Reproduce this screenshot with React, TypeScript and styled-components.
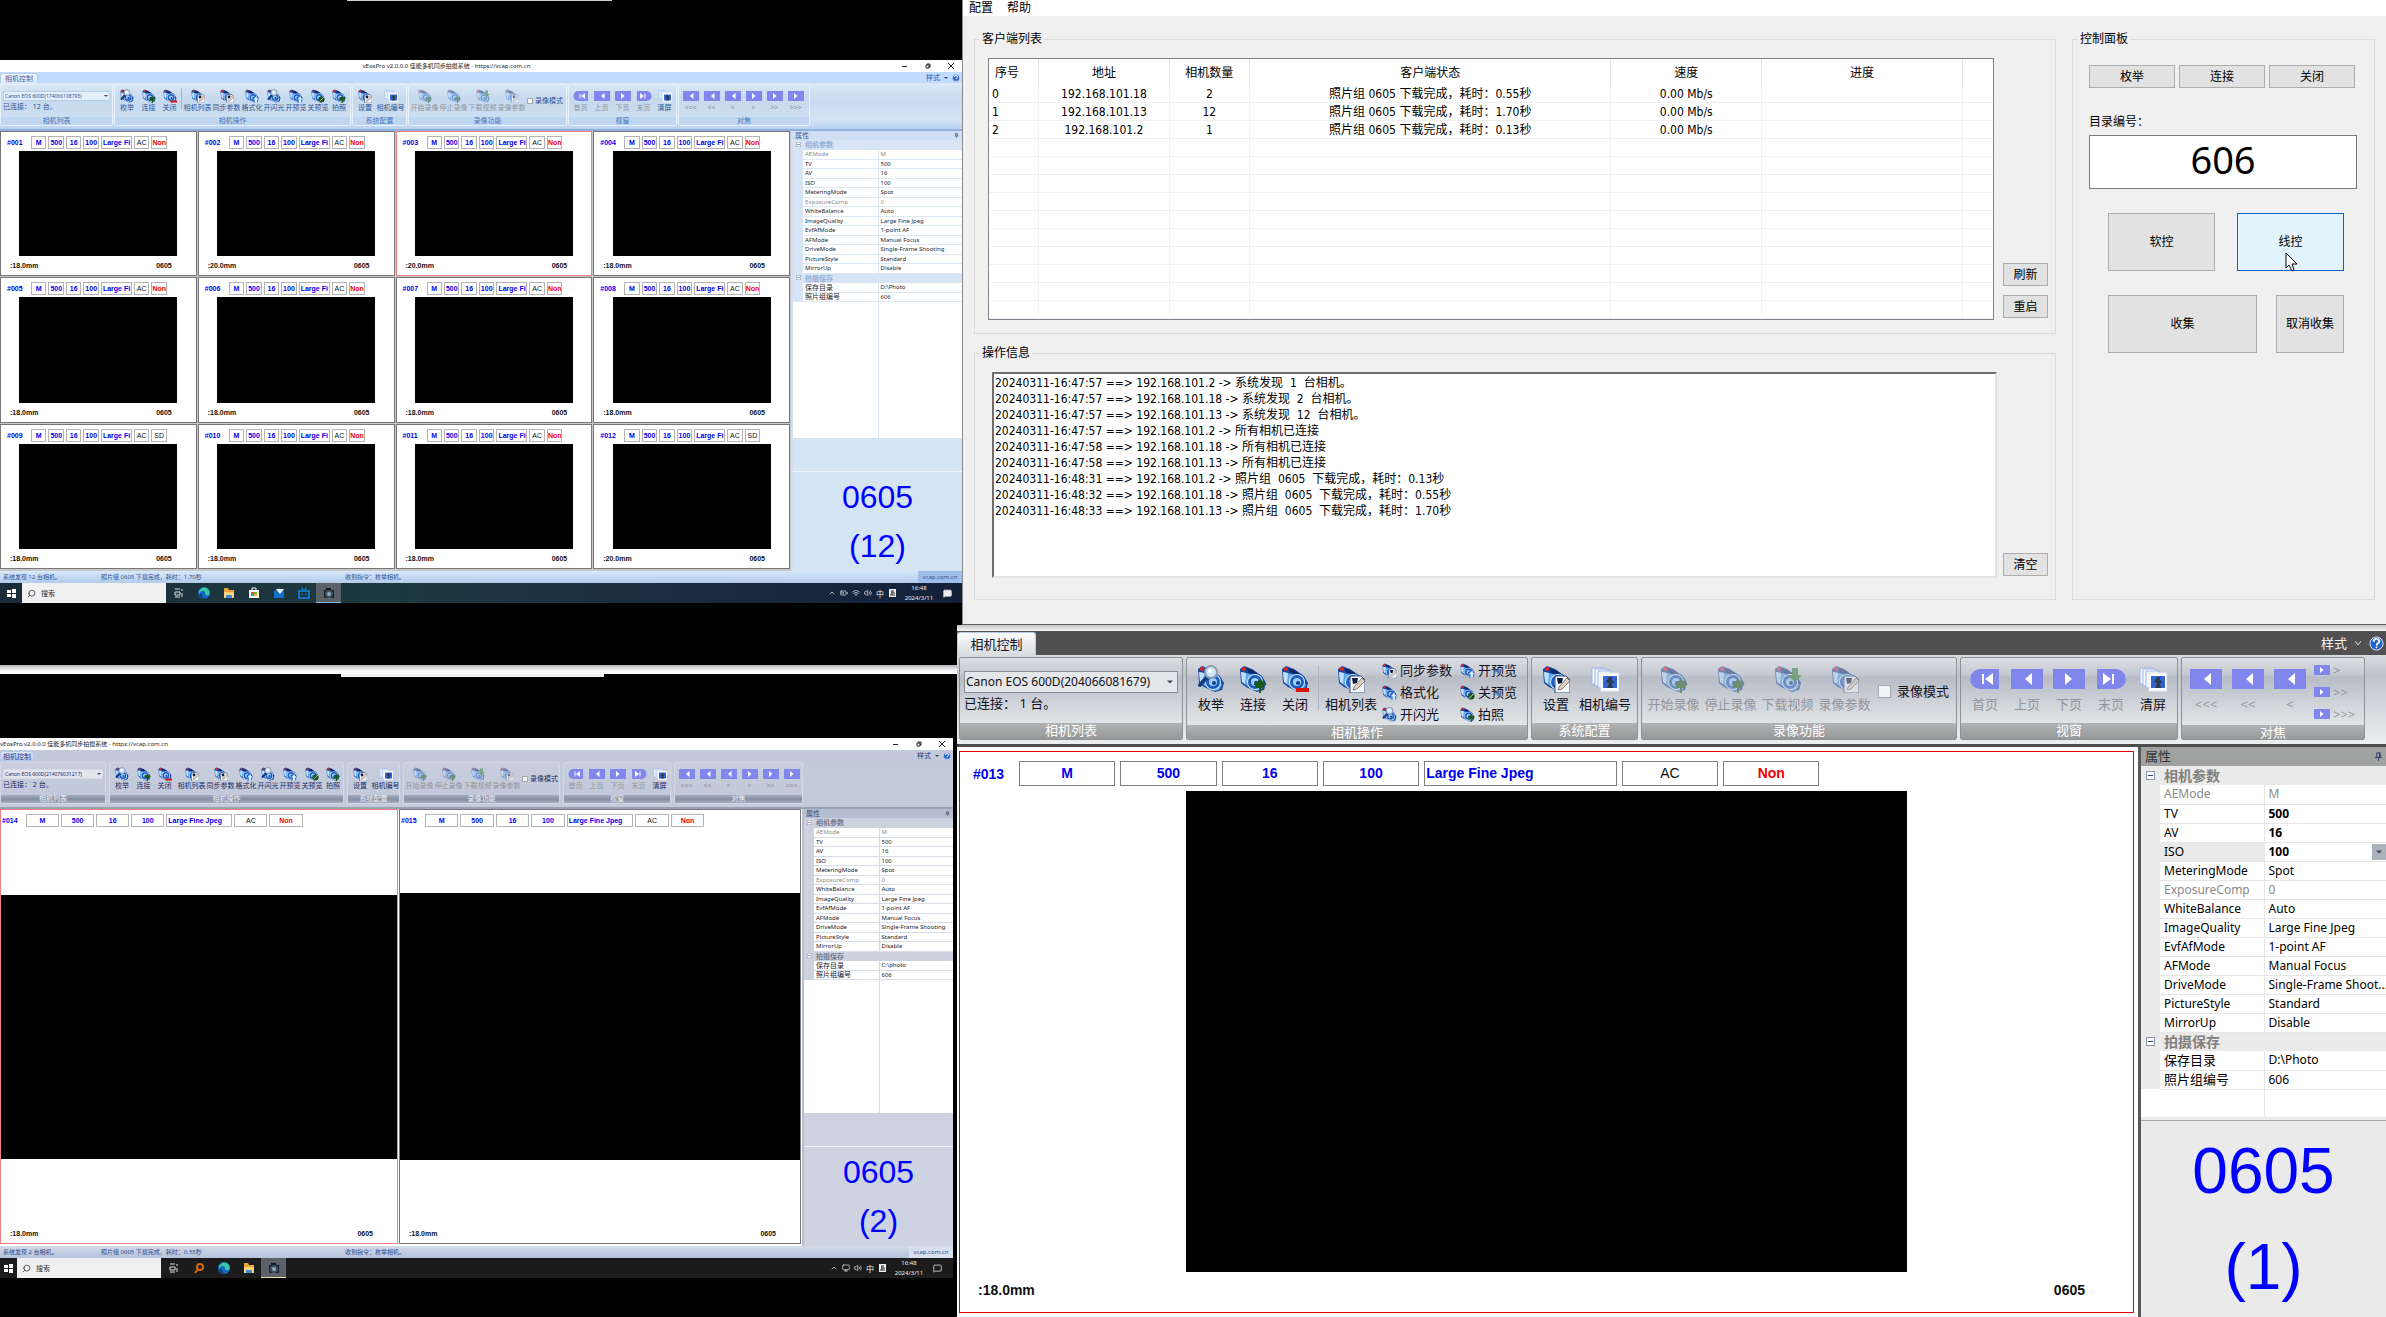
import React from 'react';
import styled, { createGlobalStyle, css, ThemeProvider } from 'styled-components';
import { ChevronUp, Search, Volume2, Wifi, MessageSquare, BatteryMedium, Monitor } from 'lucide-react';

const uiFont = `"Noto Sans", "Noto Sans CJK SC", sans-serif`;
const tahoma = `"DejaVu Sans Condensed", "DejaVu Sans", "Noto Sans CJK SC", sans-serif`;
const arial = `"Liberation Sans", "Noto Sans CJK SC", sans-serif`;

const Global = createGlobalStyle`
  * { box-sizing: border-box; }
  body { margin: 0; background: #000; font-family: ${uiFont}; }
  button, input, select, textarea { font: inherit; color: inherit; margin: 0; }
  button { cursor: pointer; }
`;

/* ---------- themes ---------- */

const small = {
  large: false,
  text: 6, cjk: 7, combo: 5, category: 7, chip: 7, counter: 32, counterLine: 49,
  tabBar: 11, tabWidth: 38, ribbon: 48, ribbonPad: '1px 0 3px', groupGap: 1,
  icon: 14, buttonPad: 4, label: 8, captionHeight: 8,
  comboHeight: 10, comboPad: '6px 2px 0', comboGap: 1,
  chipHeight: 13, chipGap: 2, chipLine: 11,
  cellPadTop: 4, footer: 19, stagePad: '2px 0 0',
  panelHead: 9, gutter: 10, cellPad: 2,
};

const blueTheme = {
  ...small,
  tabBg: '#c0dbff', tabFace: 'linear-gradient(#f3f8ff, #dbe8f8)', tabText: '#3d5f9c', toolText: '#35589b',
  ribbonBg: 'linear-gradient(#dce9f7 0%, #c8daf0 40%, #d2e4f5 80%, #b9d2f0 100%)',
  ribbonEdge: '#8fb0dd', groupBg: 'linear-gradient(#d9e6f4, #c6d9ee 35%, #cfe0f2)', groupEdge: '#e6f0fa',
  captionBg: '#bfd7f0', captionText: '#4c76b8', labelText: '#2f5493', fieldBg: '#e3effc', fieldEdge: '#b4cdea',
  headBg: '#cfe0f4', headText: '#3a5f9e', catBg: '#d6e4f3', catText: '#93aedb', grid: '#dce8f4', propText: '#222834',
  counterBg: '#d5e4f3', statusBg: 'linear-gradient(#d7e8fb, #b2cbea)', statusText: '#33568f', statusEnd: '#9dbee8',
  split: 'repeat(4, minmax(0, 1fr))', sideWidth: '169px', nameWidth: '75px', labelLeft: 6, labelWidth: 24, chips: 72,
  cellEdge: '#777', activeEdge: '#f28080', frame: '#c8c8c8',
};

const slateTheme = {
  ...small,
  tabWidth: 34, groupGap: 3,
  tabBg: '#c3c9da', tabFace: 'linear-gradient(#dfe8f8, #b6c7ea)', tabText: '#27408b', toolText: '#27376e',
  ribbonBg: '#c3cada',
  ribbonEdge: '#9aa1b3', groupBg: 'linear-gradient(#c8cede, #c0c7d8)', groupEdge: '#d3d8e4',
  captionBg: 'linear-gradient(#a7afc2, #858da2 50%, #a3abbe)', captionText: '#eef0f6', labelText: '#1d2d66', fieldBg: '#e2e5ee', fieldEdge: '#d6dae5',
  headBg: '#b6bfd2', headText: '#3b4c7a', catBg: '#cdd2df', catText: '#747c90', grid: '#d9dde8', propText: '#1e2028',
  counterBg: '#cdd3e0', statusBg: 'linear-gradient(#d3dbe9, #b5c2da)', statusText: '#2f4a8c', statusEnd: '#d7dfec',
  split: '398px minmax(0, 1fr)', sideWidth: '149px', nameWidth: '65px', labelLeft: 1, labelWidth: 24, chips: 70,
  cellEdge: '#777', activeEdge: '#ef8080', frame: '#fff',
};

const silverTheme = {
  large: true,
  text: 12, cjk: 13, combo: 12, category: 14, chip: 14, counter: 64, counterLine: 96,
  tabBar: 24, tabWidth: 79, ribbon: 92, ribbonPad: '2px 0 4px 2px', groupGap: 3,
  icon: 28, buttonPad: 7, label: 20, captionHeight: 16,
  comboHeight: 22, comboPad: '13px 4px 0', comboGap: 0,
  chipHeight: 25, chipGap: 5, chipLine: 23,
  cellPadTop: 9, footer: 40, stagePad: '5px 0 0',
  panelHead: 19, gutter: 19, cellPad: 4,
  tabBg: '#515050', tabFace: 'linear-gradient(#fbfbfc, #d9dce1)', tabText: '#14142a', toolText: '#f2f2f2',
  ribbonBg: 'linear-gradient(#d9dbde 0%, #bfc3cb 22%, #cdd0d6 45%, #e4e7e9 85%, #eceef0 100%)',
  ribbonEdge: '#4c4c4c', groupBg: 'linear-gradient(#dcdee2 0%, #c6c9d1 20%, #b8bcc6 24%, #d3d6da 60%, #e6e9ea 90%)', groupEdge: '#8f9194',
  captionBg: 'linear-gradient(#b0b2b4, #979898)', captionText: '#ffffff', labelText: '#10101c', fieldBg: '#e3e7e9', fieldEdge: '#8a8d92',
  headBg: '#9fa2a1', headText: '#33363a', catBg: '#eaeaea', catText: '#808080', grid: '#e6e6e6', propText: '#000',
  counterBg: '#eaeaea', statusBg: '#eaeaea', statusText: '#000', statusEnd: '#eaeaea',
  split: 'minmax(0, 1fr)', sideWidth: '245px', nameWidth: '104px', labelLeft: 13, labelWidth: 46, chips: 69,
  cellEdge: '#777', activeEdge: '#e60000', frame: '#fff',
};

/* ---------- drawings ---------- */

type Badge = 'search' | 'plus' | 'minus' | 'edit' | 'reload' | 'slash' | 'down';

const CameraIcon = ({ badge, size, faded }: { badge: Badge; size: number; faded?: boolean }) => (
  <svg width={size} height={size} viewBox="0 0 28 28" opacity={faded ? 0.5 : 1} aria-hidden="true">
    <path d="M1 4 L5 1 L13 4 L23 11 L27 18 L25 25 L18 27 L7 22 L2 18Z" fill="#17459c" />
    <path d="M2 7 L11 9 L22 14 L25 20 L22 25 L17 26 L8 21 L3 17Z" fill="#5fa8ee" />
    <path d="M2 7 L7 8 L6 19 L3 17Z" fill="#bfe0ff" />
    <path d="M7 3 L13 5 L19 9 L10 8Z" fill="#0d2766" />
    <circle cx="5" cy="4" r="2" fill="#e2231f" />
    <circle cx="16" cy="17" r="8" fill="#d4eaff" />
    <circle cx="16" cy="17" r="7" fill="#1e5cc0" />
    <circle cx="16" cy="17" r="4" fill="#9fd0ff" />
    <circle cx="17" cy="18" r="2" fill="#11398c" />
    {badge === 'search' && (
      <g>
        <path d="M11 11 L3 20" stroke="#163a80" strokeWidth="4" strokeLinecap="round" />
        <circle cx="14" cy="7" r="6" fill="#cfe4f4" stroke="#8d9eb2" strokeWidth="2" />
        <circle cx="13" cy="6" r="2" fill="#fff" />
      </g>
    )}
    {badge === 'plus' && <path d="M21 14 L28 20 L25 20 L25 23 L22 23 L22 28 L20 28 L20 23 L16 23 L16 20 L14 20Z" fill="#1c5a1c" />}
    {badge === 'minus' && <path d="M15 23 H28 V27 H15Z" fill="#d8140f" />}
    {badge === 'edit' && (
      <g>
        <path d="M13 11 H24 L28 15 V28 H13Z" fill="#f7fbff" stroke="#24487f" />
        <path d="M15 13 L21 13 L20 18 L16 19Z" fill="#0b1c3f" />
        <path d="M17 22 L25 13 L28 16 L20 24 L16 25Z" fill="#e3cfc0" stroke="#6d6258" strokeWidth="0.8" />
      </g>
    )}
    {badge === 'reload' && (
      <g>
        <path d="M17 13 L27 19 L26 27 L17 25Z" fill="#2f7fe0" />
        <path d="M22 15 L27 21 L24 21 L24 27 L20 27 L20 21 L17 21Z" fill="#dff0ff" />
      </g>
    )}
    {badge === 'slash' && (
      <g>
        <circle cx="21" cy="21" r="6" fill="#1c4d1e" />
        <path d="M17 25 L26 16" stroke="#8fc48a" strokeWidth="2" />
      </g>
    )}
    {badge === 'down' && <path d="M18 3 H24 V10 H28 L21 17 L14 10 H18Z" fill="#2f7d33" />}
  </svg>
);

const GalleryIcon = ({ size }: { size: number }) => (
  <svg width={size} height={size} viewBox="0 0 28 28" aria-hidden="true">
    <path d="M1 3 H14 V19 H1Z" fill="#f8fbff" stroke="#9bb2e6" />
    <path d="M4 4 H17 V21 H4Z" fill="#f8fbff" stroke="#9bb2e6" />
    <path d="M7 6 H20 V23 H7Z" fill="#f8fbff" stroke="#9bb2e6" />
    <path d="M10 8 H28 V26 H10Z" fill="#fff" stroke="#dfe6f6" />
    <path d="M12 11 H26 V23 H12Z" fill="#3563d2" />
    <path d="M18 12 L21 12 L21 15 L24 18 L21 18 L22 23 L16 23 L18 18 L15 17Z" fill="#2c3b4f" />
  </svg>
);

const NavIcon = ({ kind, size }: { kind: 'first' | 'prev' | 'next' | 'last'; size: number }) => (
  <svg width={(size * 8) / 7} height={size} viewBox="0 0 32 28" aria-hidden="true">
    {kind === 'first' && <path d="M11 4 H30 V24 H11 A10 10 0 0 1 11 4Z" fill="#8086ec" />}
    {kind === 'last' && <path d="M2 4 H21 A10 10 0 0 1 21 24 H2Z" fill="#8086ec" />}
    {(kind === 'prev' || kind === 'next') && <path d="M0 4 H32 V24 H0Z" fill="#8086ec" />}
    {kind === 'first' && <path d="M13 9 H15 V19 H13Z M24 8 V20 L16 14Z" fill="#fff" />}
    {kind === 'last' && <path d="M17 9 H19 V19 H17Z M8 8 V20 L16 14Z" fill="#fff" />}
    {kind === 'prev' && <path d="M21 8 V20 L14 14Z" fill="#fff" />}
    {kind === 'next' && <path d="M12 8 V20 L19 14Z" fill="#fff" />}
  </svg>
);

const Arrow = ({ size, color = '#445' }: { size: number; color?: string }) => (
  <svg width={size} height={size} viewBox="0 0 8 8" aria-hidden="true"><path d="M0 2 H8 L4 6Z" fill={color} /></svg>
);

const Caret = () => (
  <svg width="6" height="6" viewBox="0 0 6 6" aria-hidden="true"><path d="M0 1 L3 5 L6 1" fill="none" stroke="#ddd" /></svg>
);

const HelpIcon = ({ size }: { size: number }) => (
  <svg width={size} height={size} viewBox="0 0 16 16" aria-hidden="true">
    <circle cx="8" cy="8" r="7" fill="#2463c8" stroke="#e6efff" />
    <path d="M5 6 Q5 3 8 3 Q11 3 11 6 Q11 7 9 8 L8 10" fill="none" stroke="#fff" strokeWidth="2" />
    <circle cx="8" cy="12" r="1" fill="#fff" />
  </svg>
);

const PinIcon = ({ size }: { size: number }) => (
  <svg width={size} height={size} viewBox="0 0 10 10" aria-hidden="true">
    <path d="M3 1 H7 V6 M3 1 V6 M6 1 V6 M1 6 H9 M5 6 V10" fill="none" stroke="#2c3a5c" strokeWidth="1" />
  </svg>
);

/* ---------- desktop ---------- */

const Desktop = styled.main`
  display: grid;
  grid-template-columns: minmax(0, 957fr) minmax(0, 1429fr);
  height: 100vh;
  background: #000;
  overflow: hidden;
`;

const LeftScreens = styled.div`
  display: grid;
  grid-template-rows: 60fr minmax(0, 543fr) 62fr 12fr 61fr minmax(0, 540fr) 39fr;
  min-width: 0;
`;

const RightScreens = styled.div`
  display: grid;
  grid-template-rows: auto 6px minmax(0, 1fr);
  min-width: 0;
`;

const Void = styled.div`
  background: #000;
`;

const Sliver = styled.div`
  width: 265px;
  height: 1px;
  margin-left: 347px;
  background: #cfcfcf;
`;

const Seam = styled.div`
  display: flex;
  flex-direction: column;
`;

const SeamBand = styled.div`
  flex: 3;
  background: linear-gradient(#b9b3b9, #f4f4f4 60%, #fff);
`;

const SeamTail = styled.div`
  flex: 1;
  width: 263px;
  margin-left: 341px;
  background: #f0f0f0;
`;

const Shade = styled.div`
  background: linear-gradient(#c4c4c4, #f4f4f4);
`;

const Screen = styled.section<{ $bleed?: number; $cut?: number }>`
  display: flex;
  flex-direction: column;
  min-width: 0;
  min-height: 0;
  margin-right: ${(p) => (p.$cut ?? 0) - (p.$bleed ?? 0)}px;
`;

/* ---------- camera application ---------- */

const AppWindow = styled.div`
  display: flex;
  flex-direction: column;
  flex: 1;
  min-height: 0;
  min-width: 0;
  font-size: ${(p) => p.theme.text}px;
`;

const TitleBar = styled.header<{ $left?: boolean }>`
  display: flex;
  align-items: center;
  height: 12px;
  background: #fff;
  color: #222;
  line-height: 12px;
  span { flex: 1; text-align: ${(p) => (p.$left ? 'left' : 'center')}; white-space: nowrap; }
`;

const WindowButton = styled.button`
  display: grid;
  place-items: center;
  width: 23px;
  height: 12px;
  padding: 0;
  border: 0;
  background: none;
`;

const TabBar = styled.div`
  display: flex;
  align-items: flex-end;
  justify-content: space-between;
  height: ${(p) => p.theme.tabBar}px;
  background: ${(p) => p.theme.tabBg};
`;

const Tab = styled.button`
  align-self: stretch;
  width: ${(p) => p.theme.tabWidth}px;
  margin-top: 1px;
  padding: 0;
  border: 1px solid #b7cbe8;
  border-bottom: 0;
  border-radius: 3px 3px 0 0;
  background: ${(p) => p.theme.tabFace};
  color: ${(p) => p.theme.tabText};
  font-size: ${(p) => p.theme.cjk}px;
  line-height: 1;
`;

const StyleMenu = styled.div`
  display: flex;
  align-items: center;
  align-self: stretch;
  gap: ${(p) => (p.theme.large ? 8 : 4)}px;
  padding-right: 2px;
  color: ${(p) => p.theme.toolText};
  font-size: ${(p) => p.theme.cjk}px;
`;

const PlainButton = styled.button`
  display: flex;
  align-items: center;
  gap: ${(p) => (p.theme.large ? 8 : 4)}px;
  padding: 0;
  border: 0;
  background: none;
  line-height: 1;
`;

const Ribbon = styled.nav`
  display: flex;
  gap: ${(p) => p.theme.groupGap}px;
  height: ${(p) => p.theme.ribbon}px;
  padding: ${(p) => p.theme.ribbonPad};
  background: ${(p) => p.theme.ribbonBg};
  border-bottom: ${(p) => (p.theme.large ? 3 : 2)}px solid ${(p) => p.theme.ribbonEdge};
`;

const Group = styled.section<{ $w: number }>`
  display: flex;
  flex-direction: column;
  flex: 0 0 ${(p) => p.$w}px;
  border: 1px solid ${(p) => p.theme.groupEdge};
  border-radius: 2px;
  background: ${(p) => p.theme.groupBg};
  color: ${(p) => p.theme.labelText};
  font-size: ${(p) => p.theme.cjk}px;
  white-space: nowrap;
  overflow: hidden;
`;

const GroupBody = styled.div`
  display: flex;
  flex: 1;
  align-items: flex-start;
  padding-left: ${(p) => (p.theme.large ? 3 : 1)}px;
`;

const Caption = styled.h2`
  margin: 0;
  height: ${(p) => p.theme.captionHeight}px;
  line-height: ${(p) => p.theme.captionHeight - 1}px;
  background: ${(p) => p.theme.captionBg};
  color: ${(p) => p.theme.captionText};
  font-size: inherit;
  font-weight: 400;
  text-align: center;
`;

const Tool = styled.button<{ $w: number }>`
  display: flex;
  flex-direction: column;
  align-items: center;
  flex: 0 0 ${(p) => p.$w}px;
  padding: ${(p) => p.theme.buttonPad}px 0 0;
  border: 0;
  background: none;
  line-height: ${(p) => p.theme.label}px;
  white-space: nowrap;
  svg { display: block; margin-bottom: 1px; }
  &:disabled { color: #92959c; }
`;

const Divider = styled.span`
  width: 1px;
  height: 66%;
  margin: ${(p) => (p.theme.large ? '8px 4px 0 2px' : '3px 1px 0')};
  background: #a9b3c4;
`;

const MiniTools = styled.div<{ $cols: string }>`
  display: grid;
  grid-template-columns: ${(p) => p.$cols};
  grid-auto-flow: column;
  grid-template-rows: repeat(3, 22px);
  padding: 1px 0 0 3px;
`;

const MiniTool = styled.button`
  display: flex;
  align-items: center;
  gap: 3px;
  padding: 0;
  border: 0;
  background: none;
  line-height: 20px;
  white-space: nowrap;
  &:disabled { color: #92959c; }
`;

const CheckLabel = styled.label`
  display: flex;
  align-items: center;
  gap: ${(p) => (p.theme.large ? 6 : 2)}px;
  margin: ${(p) => (p.theme.large ? '23px 0 0 5px' : '12px 0 0 1px')};
  line-height: ${(p) => p.theme.label}px;
  input {
    appearance: none;
    width: ${(p) => (p.theme.large ? 13 : 6)}px;
    height: ${(p) => (p.theme.large ? 13 : 6)}px;
    border: 1px solid #a4a8b0;
    background: #f2f4f6;
  }
`;

const ComboBody = styled.div`
  flex: 1;
  display: flex;
  flex-direction: column;
  gap: ${(p) => p.theme.comboGap}px;
  padding: ${(p) => p.theme.comboPad};
  line-height: ${(p) => (p.theme.large ? 20 : 10)}px;
`;

const Combo = styled.div`
  display: flex;
  align-items: center;
  height: ${(p) => p.theme.comboHeight}px;
  padding: 0 ${(p) => (p.theme.large ? 4 : 1)}px 0 1px;
  border: 1px solid ${(p) => p.theme.fieldEdge};
  background: ${(p) => p.theme.fieldBg};
  font-size: ${(p) => p.theme.combo}px;
  select { appearance: none; flex: 1; min-width: 0; padding: 0; border: 0; background: none; line-height: 1; }
`;

const Work = styled.div`
  display: flex;
  flex: 1;
  min-height: 0;
  background: ${(p) => (p.theme.large ? '#5a5959' : p.theme.headBg)};
`;

const Wall = styled.div<{ $rows: number }>`
  display: grid;
  flex: 1;
  grid-template-columns: ${(p) => p.theme.split};
  grid-template-rows: repeat(${(p) => p.$rows}, minmax(0, 1fr));
  gap: 1px;
  min-width: 0;
  margin-right: ${(p) => (p.theme.large ? 3 : 2)}px;
  padding: ${(p) => (p.theme.large ? '4px 4px 4px 2px' : '0 1px 2px 0')};
  background: ${(p) => p.theme.frame};
`;

const Cell = styled.article<{ $active?: boolean }>`
  display: flex;
  flex-direction: column;
  min-width: 0;
  min-height: 0;
  padding-top: ${(p) => p.theme.cellPadTop}px;
  border: 1px solid ${(p) => (p.$active ? p.theme.activeEdge : p.theme.cellEdge)};
  background: #fff;
  font: bold ${(p) => p.theme.chip}px ${arial};
`;

const CellHead = styled.header`
  display: flex;
  align-items: center;
  padding-left: ${(p) => p.theme.labelLeft}px;
  color: #0000f0;
  strong { flex: 0 0 ${(p) => p.theme.labelWidth}px; }
`;

const Chips = styled.div`
  display: grid;
  grid-template-columns: repeat(4, minmax(0, 1fr)) minmax(0, 2fr) repeat(2, minmax(0, 1fr));
  gap: ${(p) => p.theme.chipGap}px;
  flex: 0 0 ${(p) => p.theme.chips}%;
`;

const Chip = styled.span<{ $tone?: 'red' | 'black'; $left?: boolean }>`
  height: ${(p) => p.theme.chipHeight}px;
  padding-left: ${(p) => (p.$left ? 1 : 0)}px;
  border: 1px solid ${(p) => (p.theme.large ? '#808080' : '#b4b4b4')};
  background: #fff;
  color: ${(p) => (p.$tone === 'red' ? '#f00000' : p.$tone === 'black' ? '#111' : 'inherit')};
  font-weight: ${(p) => (p.$tone === 'black' ? 400 : 700)};
  line-height: ${(p) => p.theme.chipLine}px;
  text-align: ${(p) => (p.$left ? 'left' : 'center')};
  white-space: nowrap;
  overflow: hidden;
`;

const Stage = styled.div`
  display: flex;
  flex: 1;
  align-items: center;
  justify-content: center;
  min-height: 0;
  padding: ${(p) => p.theme.stagePad};
`;

const Preview = styled.div<{ $fill?: boolean }>`
  aspect-ratio: 3 / 2;
  background: #000;
  ${(p) => (p.$fill ? css`width: 100%;` : css`height: 100%;`)}
`;

const CellFoot = styled.footer`
  display: flex;
  align-items: center;
  justify-content: space-between;
  height: ${(p) => p.theme.footer}px;
  padding: ${(p) => (p.theme.large ? '0 48px 4px 18px' : '0 24px 0 9px')};
  color: #111;
`;

const Side = styled.aside`
  display: flex;
  flex-direction: column;
  flex: 0 0 ${(p) => p.theme.sideWidth};
  min-width: 0;
  background: #fff;
  color: ${(p) => p.theme.propText};
`;

const SideHead = styled.div`
  display: flex;
  align-items: center;
  justify-content: space-between;
  height: ${(p) => p.theme.panelHead}px;
  padding: 0 3px 0 ${(p) => p.theme.cellPad}px;
  background: ${(p) => p.theme.headBg};
  color: ${(p) => p.theme.headText};
  font-size: ${(p) => p.theme.cjk}px;
  line-height: 1;
`;

const Props = styled.table`
  width: 100%;
  height: ${(p) => (p.theme.large ? 323 : 162)}px;
  border-collapse: collapse;
  table-layout: fixed;
  th, td {
    padding: 0 0 0 ${(p) => p.theme.cellPad}px;
    border: 0 solid ${(p) => p.theme.grid};
    font-weight: 400;
    line-height: 1;
    text-align: left;
    white-space: nowrap;
    overflow: hidden;
  }
  tr { height: ${(p) => (p.theme.large ? 19 : 9)}px; }
`;

const Gutter = styled.col`width: ${(p) => p.theme.gutter}px;`;
const NameCol = styled.col`width: ${(p) => p.theme.nameWidth};`;

const Toggle = styled.td`
  && { padding: 0; background: ${(p) => p.theme.catBg}; text-align: center; }
  svg { display: block; margin: auto; }
`;

const CategoryName = styled.th`
  && {
    background: ${(p) => p.theme.catBg};
    color: ${(p) => p.theme.catText};
    font-size: ${(p) => p.theme.category}px;
    font-weight: 700;
  }
`;

const NameCell = styled.th<{ $dim?: boolean; $on?: boolean; $cjk?: boolean }>`
  && {
    border-bottom-width: 1px;
    background: ${(p) => (p.$on ? '#eaeaea' : '#fff')};
    color: ${(p) => (p.$dim ? '#8a8a8a' : 'inherit')};
    font-size: ${(p) => (p.$cjk ? p.theme.cjk : p.theme.text)}px;
  }
`;

const ValueCell = styled.td<{ $dim?: boolean; $bold?: boolean }>`
  && {
    border-bottom-width: 1px;
    border-left-width: 1px;
    color: ${(p) => (p.$dim ? '#8a8a8a' : 'inherit')};
    font-weight: ${(p) => (p.$bold ? 700 : 400)};
  }
`;

const ValuePick = styled.label`
  display: flex;
  align-items: center;
  height: 16px;
  select { appearance: none; flex: 1; min-width: 0; height: 16px; padding: 0; border: 0; background: none; line-height: 1; }
  span { display: grid; place-items: center; width: 14px; height: 16px; background: #aab2bc; }
`;

const Blank = styled.div`
  flex: 1;
  margin-left: ${(p) => Number(p.theme.gutter) + parseInt(p.theme.nameWidth, 10)}px;
  border-left: 1px solid ${(p) => p.theme.grid};
`;

const Fill = styled.div`
  height: ${(p) => (p.theme.large ? 3 : 33)}px;
  background: ${(p) => p.theme.counterBg};
`;

const Counter = styled.output`
  display: flex;
  flex-direction: column;
  justify-content: center;
  align-items: center;
  height: ${(p) => (p.theme.large ? 197 : 100)}px;
  border-top: 1px solid ${(p) => (p.theme.large ? '#a8a8a8' : '#f0f5fb')};
  background: ${(p) => p.theme.counterBg};
  color: #0000ff;
  font: ${(p) => p.theme.counter}px / ${(p) => p.theme.counterLine}px ${arial};
`;

const StatusBar = styled.footer`
  display: grid;
  grid-template-columns: 98px 244px 1fr 44px;
  height: 12px;
  background: ${(p) => p.theme.statusBg};
  color: ${(p) => p.theme.statusText};
  line-height: 12px;
  white-space: nowrap;
  span { padding-left: 3px; }
  span:last-child { background: ${(p) => p.theme.statusEnd}; text-align: center; padding: 0; }
`;

/* ---------- task bar ---------- */

const TaskBar = styled.footer<{ $bg: string }>`
  display: flex;
  align-items: center;
  height: 20px;
  background: ${(p) => p.$bg};
  color: #eee;
  font-size: 6px;
`;

const StartButton = styled.button<{ $w: number }>`
  display: grid;
  place-items: center;
  width: ${(p) => p.$w}px;
  height: 20px;
  padding: 0;
  border: 0;
  background: none;
`;

const SearchBox = styled.label`
  display: flex;
  align-items: center;
  gap: 5px;
  width: 144px;
  height: 20px;
  padding-left: 5px;
  background: #f0f0f0;
  color: #333;
  svg { transform: scaleX(-1); }
  input { flex: 1; min-width: 0; padding: 0; border: 0; background: none; font-size: 7px; line-height: 1; }
  input::placeholder { color: #333; }
`;

const TaskButton = styled.button<{ $on?: string }>`
  display: grid;
  place-items: center;
  width: 25px;
  height: 20px;
  padding: 0;
  border: 0;
  border-bottom: 1px solid ${(p) => p.$on ?? 'transparent'};
  background: ${(p) => (p.$on ? '#5a6168' : 'none')};
`;

const Tray = styled.div<{ $right: number }>`
  display: flex;
  align-items: center;
  margin-left: auto;
  padding-right: ${(p) => p.$right}px;
  span { display: grid; place-items: center; width: 12px; font-size: 8px; }
  time { width: 34px; margin-left: 4px; line-height: 10px; text-align: center; }
`;

const Notice = styled.span`
  && { width: 22px; }
`;

const TaskGlyph = ({ kind }: { kind: string }) => (
  <svg width="12" height="12" viewBox="0 0 12 12" aria-hidden="true">
    {kind === 'view' && <path d="M2 2 H7 M2 5 H7 V8 H2Z M2 10 H7 M9 2 V4 M9 6 V10" stroke="#ddd" fill="none" />}
    {kind === 'find' && <g fill="none" stroke="#d3690f" strokeWidth="2"><circle cx="7" cy="5" r="3" /><path d="M5 7 L2 11" /></g>}
    {kind === 'edge' && (
      <g>
        <circle cx="6" cy="6" r="6" fill="#1668c4" />
        <path d="M1 4 Q4 -1 9 1 Q13 4 11 8 Q8 9 7 7 Q8 4 5 4 Q2 4 1 7Z" fill="#3cc6a8" />
        <path d="M4 6 Q3 10 7 11 Q3 12 1 8Z" fill="#0d3f8a" />
      </g>
    )}
    {kind === 'folder' && <g><path d="M1 1 H5 L6 3 H11 V11 H1Z" fill="#e9a33b" /><path d="M1 5 H11 V11 H1Z" fill="#fcd27a" /><path d="M3 8 H9 V11 H3Z" fill="#3c8ed8" /></g>}
    {kind === 'store' && (
      <g>
        <path d="M1 3 H11 V11 H1Z" fill="#f4f4f4" /><path d="M4 3 V1 H8 V3" fill="none" stroke="#f4f4f4" />
        <path d="M3 5 H6 V7 H3Z" fill="#e5502b" /><path d="M6 5 H9 V7 H6Z" fill="#72b62b" />
        <path d="M3 7 H6 V9 H3Z" fill="#2b90e0" /><path d="M6 7 H9 V9 H6Z" fill="#f2b525" />
      </g>
    )}
    {kind === 'mail' && <g><path d="M1 4 L6 1 L11 4 V11 H1Z" fill="#1470c9" /><path d="M3 2 H11 L7 7Z" fill="#f2f7fc" /></g>}
    {kind === 'tv' && <g fill="none" stroke="#1184e8" strokeWidth="1.5"><path d="M1 4 H11 V11 H1Z M4 1 L5 3 M8 1 L7 3" /><path d="M4 7 V8 M8 7 V8" /></g>}
    {kind === 'cam' && <g><path d="M1 3 H11 V11 H1Z" fill="#1b2026" /><circle cx="6" cy="7" r="4" fill="#3d5063" /><circle cx="6" cy="7" r="2" fill="#93a9bd" /><path d="M3 1 H8 V3 H3Z" fill="#11161b" /></g>}
  </svg>
);

const WindowsTaskBar = ({ bg, accent, start, icons, second, right }: {
  bg: string; accent: string; start: number; icons: string[]; second?: boolean; right: number;
}) => (
  <TaskBar $bg={bg}>
    <StartButton $w={start} aria-label="开始">
      <svg width="9" height="9" viewBox="0 0 9 9" aria-hidden="true"><path d="M0 1 H4 V4 H0Z M5 0 H9 V4 H5Z M0 5 H4 V8 H0Z M5 5 H9 V9 H5Z" fill="#fff" /></svg>
    </StartButton>
    <SearchBox>
      <Search size={9} strokeWidth={2} />
      <input placeholder="搜索" aria-label="搜索" />
    </SearchBox>
    {icons.map((k, i) => (
      <TaskButton key={k} aria-label={k} $on={i === icons.length - 1 ? accent : undefined}><TaskGlyph kind={k} /></TaskButton>
    ))}
    <Tray $right={right}>
      <span><ChevronUp size={8} /></span>
      {second ? <span><Monitor size={8} /></span> : <><span><BatteryMedium size={8} /></span><span><Wifi size={8} /></span></>}
      <span><Volume2 size={8} /></span>
      <span>中</span>
      <span>
        <svg width="7" height="8" viewBox="0 0 7 8" aria-hidden="true"><path d="M0 0 H7 V8 H0Z" fill="#eee" /><path d="M2 2 H5 M2 4 H6 M3 2 V6 M1 6 H6" stroke="#333" fill="none" /></svg>
      </span>
      <time>16:48<br />2024/3/11</time>
      <Notice><MessageSquare size={9} fill={second ? 'none' : '#eee'} /></Notice>
    </Tray>
  </TaskBar>
);

/* ---------- camera app pieces ---------- */

const smallTools: [string, Badge, number][] = [
  ['相机列表', 'edit', 29], ['同步参数', 'edit', 29], ['格式化', 'reload', 22], ['开闪光', 'search', 22],
  ['开预览', 'reload', 22], ['关预览', 'slash', 22], ['拍照', 'plus', 20],
];
const miniTools: [string, Badge][] = [
  ['同步参数', 'edit'], ['格式化', 'reload'], ['开闪光', 'search'], ['开预览', 'reload'], ['关预览', 'slash'], ['拍照', 'plus'],
];
const videoTools: [string, Badge][] = [['开始录像', 'plus'], ['停止录像', 'plus'], ['下载视频', 'down'], ['录像参数', 'edit']];
const pageTools: [string, 'first' | 'prev' | 'next' | 'last'][] = [['首页', 'first'], ['上页', 'prev'], ['下页', 'next'], ['末页', 'last']];

const CameraRibbon = ({ large, camera, connected, widths }: {
  large?: boolean; camera: string; connected: string; widths: number[];
}) => {
  const icon = large ? 28 : 14;
  const two = large ? 42 : 22;
  const nav = large ? 42 : 21;
  const four = large ? 56 : 29;
  return (
    <Ribbon>
      <Group $w={widths[0]}>
        <ComboBody>
          <Combo>
            <select aria-label="相机"><option>{camera}</option></select>
            <Arrow size={large ? 6 : 4} />
          </Combo>
          <span>已连接： {connected} 台。</span>
        </ComboBody>
        <Caption>相机列表</Caption>
      </Group>
      <Group $w={widths[1]}>
        <GroupBody>
          <Tool $w={two}><CameraIcon badge="search" size={icon} />枚举</Tool>
          <Tool $w={nav}><CameraIcon badge="plus" size={icon} />连接</Tool>
          <Tool $w={nav}><CameraIcon badge="minus" size={icon} />关闭</Tool>
          <Divider />
          {large ? (
            <>
              <Tool $w={four}><CameraIcon badge="edit" size={icon} />相机列表</Tool>
              <MiniTools $cols="78px 58px">
                {miniTools.map(([t, b]) => <MiniTool key={t}><CameraIcon badge={b} size={15} />{t}</MiniTool>)}
              </MiniTools>
            </>
          ) : (
            smallTools.map(([t, b, w]) => <Tool key={t} $w={w}><CameraIcon badge={b} size={icon} />{t}</Tool>)
          )}
        </GroupBody>
        <Caption>相机操作</Caption>
      </Group>
      <Group $w={widths[2]}>
        <GroupBody>
          <Tool $w={two}><CameraIcon badge="edit" size={icon} />设置</Tool>
          <Tool $w={four}><GalleryIcon size={icon} />相机编号</Tool>
        </GroupBody>
        <Caption>系统配置</Caption>
      </Group>
      <Group $w={widths[3]}>
        <GroupBody>
          {videoTools.map(([t, b]) => (
            <Tool key={t} disabled $w={large ? 57 : 29}><CameraIcon badge={b} size={icon} faded />{t}</Tool>
          ))}
          <CheckLabel><input type="checkbox" />录像模式</CheckLabel>
        </GroupBody>
        <Caption>录像功能</Caption>
      </Group>
      <Group $w={widths[4]}>
        <GroupBody>
          {pageTools.map(([t, k]) => <Tool key={t} disabled $w={nav}><NavIcon kind={k} size={icon} />{t}</Tool>)}
          <Tool $w={nav}><GalleryIcon size={icon} />清屏</Tool>
        </GroupBody>
        <Caption>视窗</Caption>
      </Group>
      <Group $w={widths[5]}>
        <GroupBody>
          {['<<<', '<<', '<'].map((t) => <Tool key={t} disabled $w={nav}><NavIcon kind="prev" size={icon} />{t}</Tool>)}
          {large ? (
            <MiniTools $cols="48px">
              {['>', '>>', '>>>'].map((t) => <MiniTool key={t} disabled><NavIcon kind="next" size={14} />{t}</MiniTool>)}
            </MiniTools>
          ) : (
            ['>', '>>', '>>>'].map((t) => <Tool key={t} disabled $w={nav}><NavIcon kind="next" size={icon} />{t}</Tool>)
          )}
        </GroupBody>
        <Caption>对焦</Caption>
      </Group>
    </Ribbon>
  );
};

const CameraTabs = ({ large }: { large?: boolean }) => (
  <TabBar>
    <Tab>相机控制</Tab>
    <StyleMenu>
      <PlainButton>样式{large ? <Caret /> : <Arrow size={4} color="#345" />}</PlainButton>
      <PlainButton aria-label="帮助"><HelpIcon size={large ? 15 : 8} /></PlainButton>
    </StyleMenu>
  </TabBar>
);

const CameraCell = ({ id, focal, card = 'Non', quality = 'Large Fine Jpeg', active, fill }: {
  id: string; focal: string; card?: string; quality?: string; active?: boolean; fill?: boolean;
}) => (
  <Cell $active={active}>
    <CellHead>
      <strong>#{id}</strong>
      <Chips>
        <Chip>M</Chip><Chip>500</Chip><Chip>16</Chip><Chip>100</Chip>
        <Chip $left>{quality}</Chip>
        <Chip $tone="black">AC</Chip>
        <Chip $tone={card === 'Non' ? 'red' : 'black'}>{card}</Chip>
      </Chips>
    </CellHead>
    <Stage><Preview $fill={fill} /></Stage>
    <CellFoot><span>:{focal}mm</span><span>0605</span></CellFoot>
  </Cell>
);

const Collapse = ({ large }: { large?: boolean }) => (
  <Toggle>
    <svg width={large ? 9 : 5} height={large ? 9 : 5} viewBox="0 0 9 9" aria-hidden="true">
      <path d="M0 0 H9 V9 H0Z" fill="#fff" stroke="#8d96a8" strokeWidth="2" /><path d="M2 4 H7 V5 H2Z" fill="#27407c" />
    </svg>
  </Toggle>
);

const Properties = ({ large, folder, count, code }: { large?: boolean; folder: string; count: string; code: string }) => {
  const rows: [string, string][] = [
    ['AEMode', 'M'], ['TV', '500'], ['AV', '16'], ['ISO', '100'], ['MeteringMode', 'Spot'], ['ExposureComp', '0'],
    ['WhiteBalance', 'Auto'], ['ImageQuality', 'Large Fine Jpeg'], ['EvfAfMode', '1-point AF'], ['AFMode', 'Manual Focus'],
    ['DriveMode', large ? 'Single-Frame Shoot...' : 'Single-Frame Shooting'], ['PictureStyle', 'Standard'], ['MirrorUp', 'Disable'],
  ];
  return (
    <Side>
      <SideHead>属性<PinIcon size={large ? 9 : 5} /></SideHead>
      <Props>
        <colgroup><Gutter /><NameCol /><col /></colgroup>
        <tbody>
          <tr><Collapse large={large} /><CategoryName colSpan={2}>相机参数</CategoryName></tr>
          {rows.map(([n, v]) => {
            const dim = n === 'AEMode' || n === 'ExposureComp';
            return (
              <tr key={n}>
                <Toggle />
                <NameCell scope="row" $dim={dim} $on={large && n === 'ISO'}>{n}</NameCell>
                <ValueCell $dim={dim} $bold={large && ['TV', 'AV', 'ISO'].includes(n)}>
                  {large && n === 'ISO' ? (
                    <ValuePick><select aria-label="ISO"><option>{v}</option></select><span><Arrow size={6} /></span></ValuePick>
                  ) : v}
                </ValueCell>
              </tr>
            );
          })}
          <tr><Collapse large={large} /><CategoryName colSpan={2}>拍摄保存</CategoryName></tr>
          <tr><Toggle /><NameCell scope="row" $cjk>保存目录</NameCell><ValueCell>{folder}</ValueCell></tr>
          <tr><Toggle /><NameCell scope="row" $cjk>照片组编号</NameCell><ValueCell>606</ValueCell></tr>
        </tbody>
      </Props>
      <Blank />
      <Fill />
      <Counter><span>{code}</span><span>({count})</span></Counter>
    </Side>
  );
};

const WindowTitle = ({ left }: { left?: boolean }) => (
  <TitleBar $left={left}>
    <span>vEosPro v2.0.0.0 佳能多机同步拍摄系统 - https://vcap.com.cn</span>
    <WindowButton aria-label="最小化"><svg width="5" height="5" viewBox="0 0 5 5"><path d="M0 2 H5 V3 H0Z" fill="#222" /></svg></WindowButton>
    <WindowButton aria-label="还原"><svg width="6" height="6" viewBox="0 0 6 6"><path d="M1 2 H4 V5 H1Z M2 2 V1 H5 V4 H4" fill="none" stroke="#222" /></svg></WindowButton>
    <WindowButton aria-label="关闭"><svg width="6" height="6" viewBox="0 0 6 6"><path d="M0 0 L6 6 M6 0 L0 6" stroke="#222" /></svg></WindowButton>
  </TitleBar>
);

const Status = ({ found, done }: { found: string; done: string }) => (
  <StatusBar>
    <span>系统发现 {found} 台相机。</span>
    <span>照片组 0605 下载完成，耗时：{done}秒</span>
    <span>收到指令：枚举相机。</span>
    <span>vcap.com.cn</span>
  </StatusBar>
);

const wall = [
  ['001', '18.0'], ['002', '20.0'], ['003', '20.0'], ['004', '18.0'],
  ['005', '18.0'], ['006', '18.0'], ['007', '18.0'], ['008', '18.0'],
  ['009', '18.0'], ['010', '18.0'], ['011', '18.0'], ['012', '20.0'],
];

/* ---------- manager window ---------- */

const Manager = styled.section`
  display: flex;
  flex-direction: column;
  margin-left: 5px;
  padding-bottom: 24px;
  border-left: 1px solid #8a8a8a;
  border-bottom: 1px solid #5f5f5f;
  background: #f0f0f0;
  color: #000;
  font: 12px / 16px ${tahoma};
`;

const Menu = styled.nav`
  display: flex;
  gap: 14px;
  height: 16px;
  padding-left: 6px;
  background: #fff;
`;

const MenuItem = styled.button`
  padding: 0;
  border: 0;
  background: none;
  line-height: 16px;
`;

const ManagerBody = styled.div`
  display: grid;
  grid-template-columns: minmax(0, 1fr) 303px;
  grid-template-rows: auto auto;
  gap: 11px 16px;
  padding: 15px 11px 0;
`;

const Box = styled.fieldset<{ $pad: string; $tall?: boolean }>`
  min-width: 0;
  margin: 0;
  padding: ${(p) => p.$pad};
  border: 1px solid #dcdcdc;
  ${(p) => p.$tall && css`grid-column: 2; grid-row: 1 / span 2;`}
`;

const BoxLegend = styled.legend<{ $pull: number }>`
  margin-left: -${(p) => p.$pull}px;
  padding: 0 2px;
  line-height: 16px;
`;

const ListRow = styled.div<{ $gap: number }>`
  display: flex;
  gap: ${(p) => p.$gap}px;
`;

const ClientTable = styled.table`
  flex: 1;
  width: 100%;
  min-width: 0;
  table-layout: fixed;
  border: 1px solid #82828f;
  border-collapse: separate;
  border-spacing: 0;
  background: #fff;
  text-align: center;
  th { height: 26px; padding: 1px 0 0; border-right: 1px solid #e5e5e5; font-weight: 400; }
  td { height: 18px; padding: 0; border: 0 solid #f0f0f0; border-width: 0 1px 1px 0; line-height: 16px; white-space: nowrap; }
  td:first-child { text-align: left; padding-left: 3px; }
  th:first-child { text-align: left; padding-left: 6px; }
  th:last-child, td:last-child { border-right: 0; }
`;

const Col = styled.col<{ $w: number }>`width: ${(p) => p.$w}%;`;

const ActionColumn = styled.div`
  display: flex;
  flex-direction: column;
  justify-content: flex-end;
  gap: 9px;
  flex: 0 0 45px;
  padding-bottom: 2px;
`;

const Push = styled.button<{ $h?: number; $hot?: boolean }>`
  position: relative;
  height: ${(p) => p.$h ?? 23}px;
  padding: 0;
  border: 1px solid ${(p) => (p.$hot ? '#0a64c8' : '#adadad')};
  background: ${(p) => (p.$hot ? '#e2f3fb' : '#e1e2e1')};
`;

const Log = styled.textarea`
  flex: 1;
  display: block;
  min-width: 0;
  height: 206px;
  padding: 1px;
  border: 2px solid;
  border-color: #6e6e6e #e3e3e3 #e3e3e3 #6e6e6e;
  border-radius: 0;
  background: #fff;
  line-height: 16px;
  resize: none;
`;

const Trio = styled.div`
  display: grid;
  grid-template-columns: repeat(3, 1fr);
  gap: 4px;
  padding-right: 2px;
`;

const DirLabel = styled.label`
  display: block;
  margin-top: 26px;
`;

const DirInput = styled.input`
  display: block;
  width: 100%;
  height: 54px;
  margin-top: 5px;
  padding: 0 0 6px;
  border: 1px solid #7a7a7a;
  background: #fff;
  font: 38px ${uiFont};
  text-align: center;
`;

const BigRow = styled.div<{ $cols: string; $gap: number }>`
  display: grid;
  grid-template-columns: ${(p) => p.$cols};
  gap: ${(p) => p.$gap}px;
  margin: 24px 13px 0 19px;
`;

const Pointer = styled.svg`
  position: absolute;
  left: 47px;
  top: 38px;
`;

const clients = [
  ['0', '192.168.101.18', '2', '照片组 0605 下载完成，耗时：0.55秒', '0.00 Mb/s'],
  ['1', '192.168.101.13', '12', '照片组 0605 下载完成，耗时：1.70秒', '0.00 Mb/s'],
  ['2', '192.168.101.2', '1', '照片组 0605 下载完成，耗时：0.13秒', '0.00 Mb/s'],
];

const logText = [
  '20240311-16:47:57 ==> 192.168.101.2 -> 系统发现  1  台相机。',
  '20240311-16:47:57 ==> 192.168.101.18 -> 系统发现  2  台相机。',
  '20240311-16:47:57 ==> 192.168.101.13 -> 系统发现  12  台相机。',
  '20240311-16:47:57 ==> 192.168.101.2 -> 所有相机已连接',
  '20240311-16:47:58 ==> 192.168.101.18 -> 所有相机已连接',
  '20240311-16:47:58 ==> 192.168.101.13 -> 所有相机已连接',
  '20240311-16:48:31 ==> 192.168.101.2 -> 照片组  0605  下载完成，耗时：0.13秒',
  '20240311-16:48:32 ==> 192.168.101.18 -> 照片组  0605  下载完成，耗时：0.55秒',
  '20240311-16:48:33 ==> 192.168.101.13 -> 照片组  0605  下载完成，耗时：1.70秒',
].join('\n');

const ManagerWindow = () => (
  <Manager>
    <Menu><MenuItem>配置</MenuItem><MenuItem>帮助</MenuItem></Menu>
    <ManagerBody>
      <Box $pad="11px 7px 13px 13px">
        <BoxLegend $pull={8}>客户端列表</BoxLegend>
        <ListRow $gap={9}>
          <ClientTable>
            <colgroup>{[5, 13, 8, 36, 15, 20, 3].map((w, i) => <Col key={i} $w={w} />)}</colgroup>
            <thead><tr>{['序号', '地址', '相机数量', '客户端状态', '速度', '进度', ''].map((h, i) => <th key={i}>{h}</th>)}</tr></thead>
            <tbody>
              {Array.from({ length: 13 }, (_, r) => (
                <tr key={r}>{Array.from({ length: 7 }, (_, c) => <td key={c}>{clients[r]?.[c] ?? ''}</td>)}</tr>
              ))}
            </tbody>
          </ClientTable>
          <ActionColumn><Push>刷新</Push><Push>重启</Push></ActionColumn>
        </ListRow>
      </Box>
      <Box $pad="11px 7px 21px 17px">
        <BoxLegend $pull={12}>操作信息</BoxLegend>
        <ListRow $gap={6}>
          <Log readOnly aria-label="操作信息" value={logText} />
          <ActionColumn><Push>清空</Push></ActionColumn>
        </ListRow>
      </Box>
      <Box $tall $pad="18px 17px 0 16px">
        <BoxLegend $pull={11}>控制面板</BoxLegend>
        <Trio><Push>枚举</Push><Push>连接</Push><Push>关闭</Push></Trio>
        <DirLabel htmlFor="dir-no">目录编号：</DirLabel>
        <DirInput id="dir-no" defaultValue="606" />
        <BigRow $cols="1fr 1fr" $gap={22}>
          <Push $h={58}>软控</Push>
          <Push $h={58} $hot>
            线控
            <Pointer width="13" height="20" viewBox="0 0 13 20" aria-hidden="true">
              <path d="M1 1 V16 L4 13 L7 19 L9 18 L7 12 H12Z" fill="#fff" stroke="#000" />
            </Pointer>
          </Push>
        </BigRow>
        <BigRow $cols="149fr 68fr" $gap={19}><Push $h={58}>收集</Push><Push $h={58}>取消收集</Push></BigRow>
      </Box>
    </ManagerBody>
  </Manager>
);

export default function App() {
  return (
    <>
      <Global />
      <Desktop>
        <LeftScreens>
          <Void><Sliver /></Void>
          <ThemeProvider theme={blueTheme}>
            <Screen $bleed={5}>
              <AppWindow>
                <WindowTitle />
                <CameraTabs />
                <CameraRibbon camera="Canon EOS 600D(174066108795)" connected="12" widths={[113, 237, 55, 159, 109, 132]} />
                <Work>
                  <Wall $rows={3}>
                    {wall.map(([id, f]) => (
                      <CameraCell key={id} id={id} focal={f} quality="Large Fi" active={id === '003'} card={id === '009' || id === '012' ? 'SD' : 'Non'} />
                    ))}
                  </Wall>
                  <Properties folder="D:\Photo" code="0605" count="12" />
                </Work>
                <Status found="12" done="1.70" />
              </AppWindow>
              <WindowsTaskBar bg="linear-gradient(90deg, #1a2c3a, #1d3a40 40%, #1b2c42 70%, #14203a)" accent="#76b9ed" start={22} right={4}
                icons={['view', 'edge', 'folder', 'store', 'mail', 'tv', 'cam']} />
            </Screen>
          </ThemeProvider>
          <Void />
          <Seam><SeamBand /><SeamTail /></Seam>
          <Void />
          <ThemeProvider theme={slateTheme}>
            <Screen $cut={4}>
              <AppWindow>
                <WindowTitle left />
                <CameraTabs />
                <CameraRibbon camera="Canon EOS 600D(214076031217)" connected="2" widths={[106, 235, 53, 157, 108, 129]} />
                <Work>
                  <Wall $rows={1}>
                    <CameraCell id="014" focal="18.0" active fill />
                    <CameraCell id="015" focal="18.0" fill />
                  </Wall>
                  <Properties folder="C:\photo" code="0605" count="2" />
                </Work>
                <Status found="2" done="0.55" />
              </AppWindow>
              <WindowsTaskBar bg="#1c1c1c" accent="#f0dca0" start={17} right={5} second icons={['view', 'find', 'edge', 'folder', 'cam']} />
            </Screen>
          </ThemeProvider>
          <Void />
        </LeftScreens>
        <RightScreens>
          <ManagerWindow />
          <Shade />
          <ThemeProvider theme={silverTheme}>
            <AppWindow>
              <CameraTabs large />
              <CameraRibbon large camera="Canon EOS 600D(204066081679)" connected="1" widths={[224, 342, 107, 316, 218, 184]} />
              <Work>
                <Wall $rows={1}><CameraCell id="013" focal="18.0" active /></Wall>
                <Properties large folder="D:\Photo" code="0605" count="1" />
              </Work>
            </AppWindow>
          </ThemeProvider>
        </RightScreens>
      </Desktop>
    </>
  );
}
